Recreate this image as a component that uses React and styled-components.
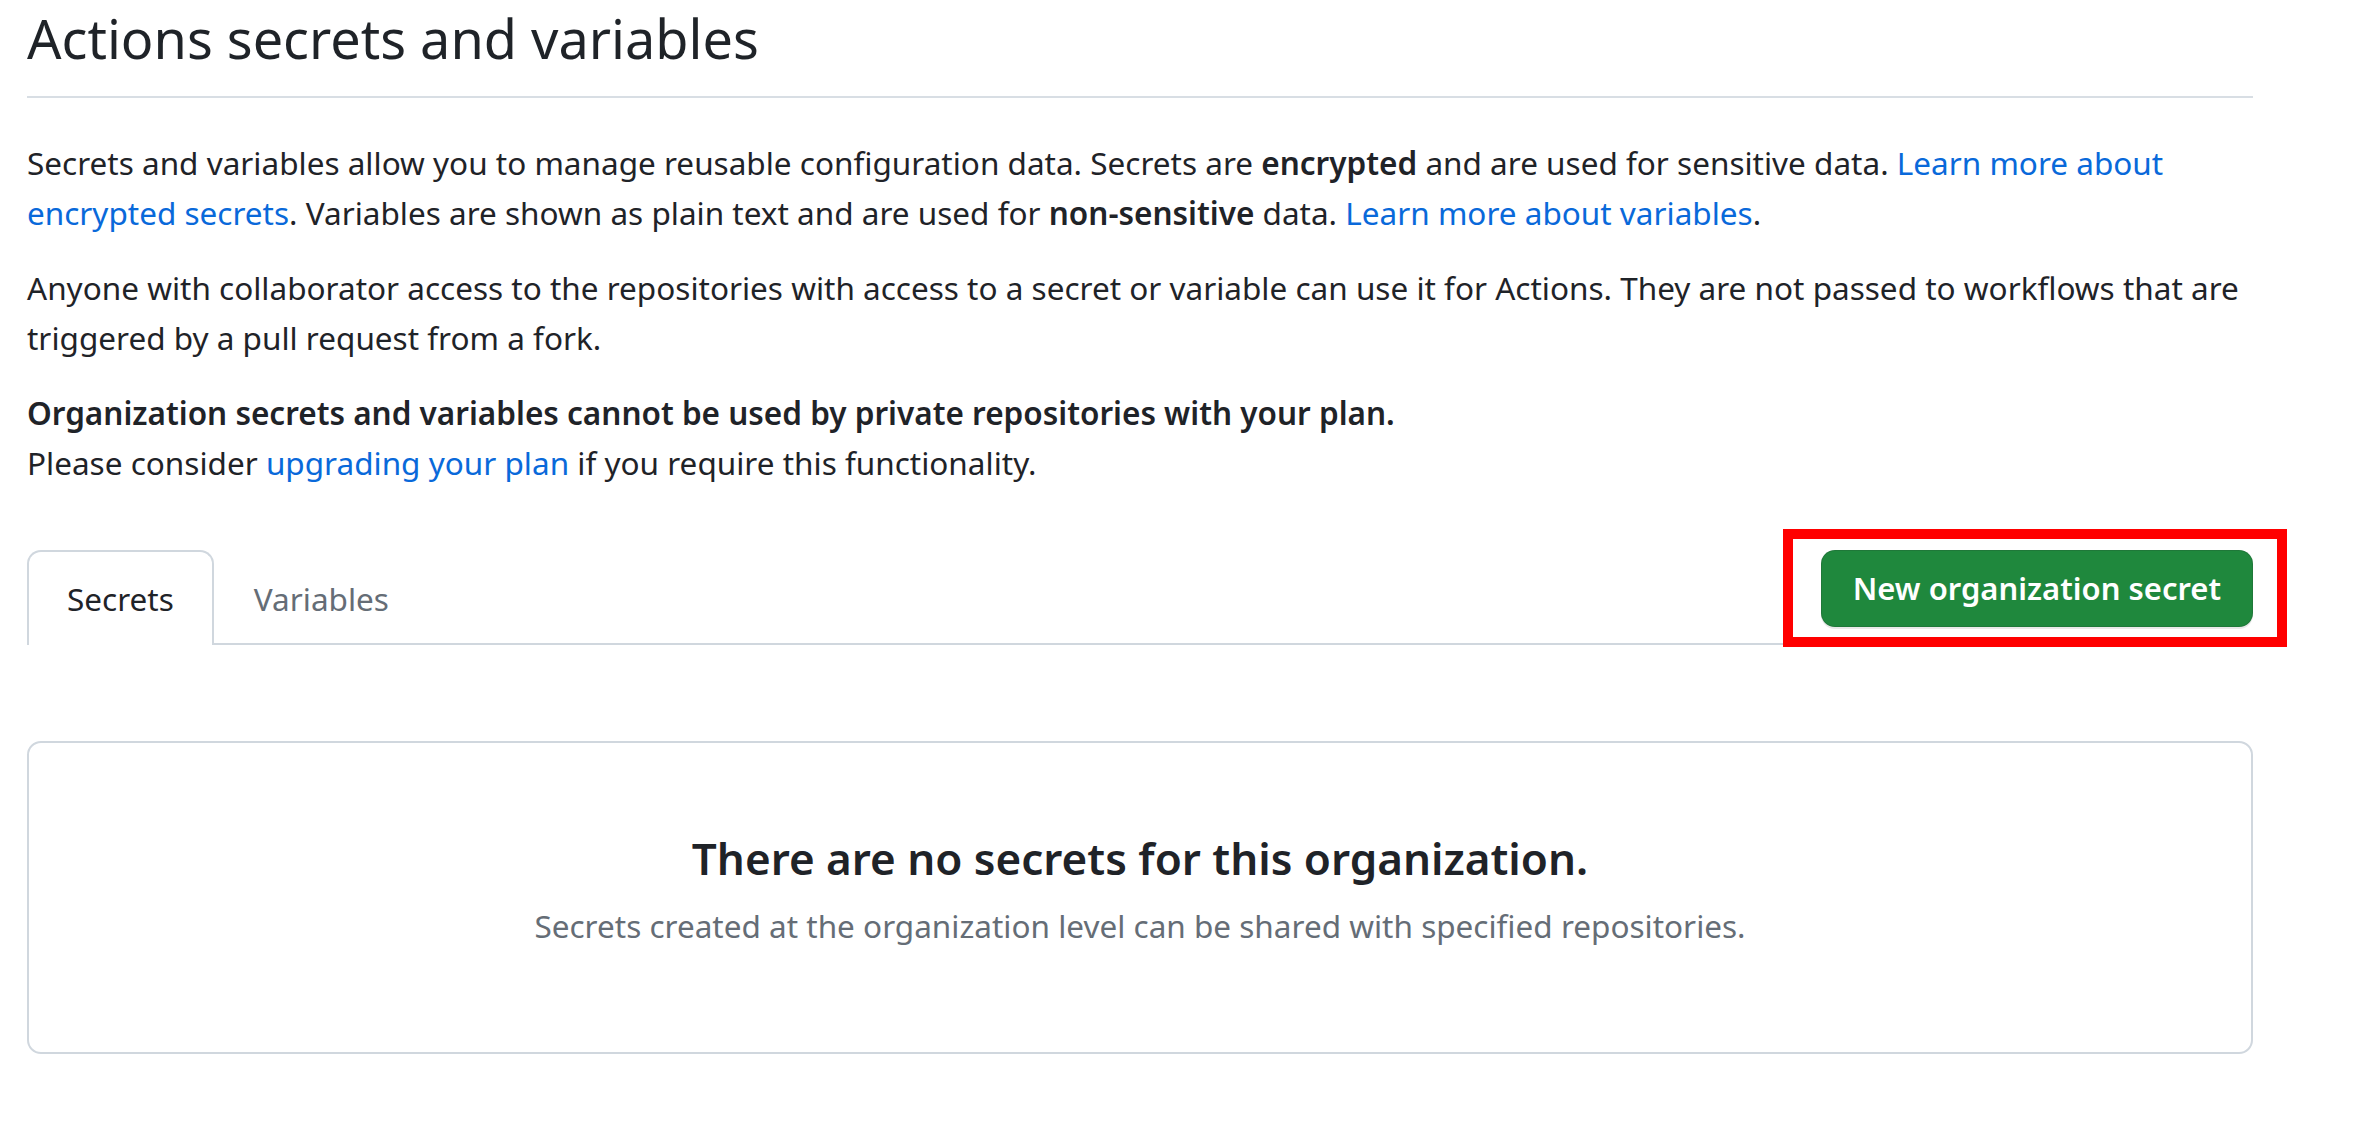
import React, { useState } from 'react';
import styled, { createGlobalStyle } from 'styled-components';

const GlobalStyle = createGlobalStyle`
  html, body {
    margin: 0;
    padding: 0;
    background: #ffffff;
  }
  body {
    font-family: "Noto Sans", "Open Sans", "Liberation Sans", sans-serif;
    color: #1f2328;
  }
  * { box-sizing: border-box; }
`;

const Page = styled.div`
  padding: 0 108px 0 27px;
  font-size: 31.5px;
  line-height: 50px;
`;

const Subhead = styled.div`
  padding-bottom: 20px;
  border-bottom: 2px solid #d8dee4;
  margin-bottom: 40px;
`;

const Title = styled.h2`
  margin: 0;
  font-size: 54px;
  line-height: 76px;
  font-weight: 400;
  color: #1f2328;
`;

const Para = styled.p`
  margin: 0 0 25px;
  white-space: nowrap;
`;

const Strong = styled.strong`
  font-weight: 600;
`;

const Link = styled.a`
  color: #0969da;
  text-decoration: none;
  cursor: pointer;
`;

const TabNav = styled.div`
  display: flex;
  align-items: flex-start;
  margin-top: 62px;
  border-bottom: 2px solid #d0d7de;
`;

const Tab = styled.button`
  font: inherit;
  margin: 0 0 -2px;
  padding: 22px 38px 21px;
  line-height: 50px;
  background: ${(p) => (p.$active ? '#ffffff' : 'transparent')};
  color: ${(p) => (p.$active ? '#1f2328' : '#656d76')};
  border: 2px solid ${(p) => (p.$active ? '#d0d7de' : 'transparent')};
  border-bottom: none;
  border-radius: 14px 14px 0 0;
  cursor: pointer;
`;

const Extra = styled.div`
  position: relative;
  margin-left: auto;
`;

const PrimaryButton = styled.button`
  font: inherit;
  font-size: 31px;
  font-weight: 600;
  line-height: 75px;
  padding: 0 31px;
  color: #ffffff;
  background: #1f883d;
  border: 1px solid rgba(31, 35, 40, 0.15);
  border-radius: 14px;
  box-shadow: 0 2px 0 rgba(31, 35, 40, 0.1);
  white-space: nowrap;
  cursor: pointer;
`;

// red annotation frame drawn over the button
const Highlight = styled.div`
  position: absolute;
  top: -21px;
  left: -38px;
  right: -34px;
  bottom: -20px;
  border: 10px solid #ff0000;
  pointer-events: none;
  z-index: 2;
`;

const Blankslate = styled.div`
  margin-top: 96px;
  padding: 82px 32px 101px;
  border: 2px solid #d0d7de;
  border-radius: 14px;
  text-align: center;
`;

const BlankTitle = styled.h3`
  margin: 0 0 10px;
  font-size: 44px;
  line-height: 66px;
  font-weight: 600;
  color: #1f2328;
`;

const BlankText = styled.p`
  margin: 0;
  color: #656d76;
`;

export default function App() {
  const [tab, setTab] = useState('secrets');

  return (
    <>
      <GlobalStyle />
      <Page>
        <Subhead>
          <Title>Actions secrets and variables</Title>
        </Subhead>

        <Para>
          Secrets and variables allow you to manage reusable configuration data. Secrets are{' '}
          <Strong>encrypted</Strong> and are used for sensitive data.{' '}
          <Link>Learn more about<br />encrypted secrets</Link>. Variables are shown as plain text and
          are used for <Strong>non-sensitive</Strong> data. <Link>Learn more about variables</Link>.
        </Para>
        <Para>
          Anyone with collaborator access to the repositories with access to a secret or variable can
          use it for Actions. They are not passed to workflows that are
          <br />
          triggered by a pull request from a fork.
        </Para>
        <Para>
          <Strong>Organization secrets and variables cannot be used by private repositories with your plan.</Strong>
          <br />
          Please consider <Link>upgrading your plan</Link> if you require this functionality.
        </Para>

        <TabNav>
          <Tab $active={tab === 'secrets'} onClick={() => setTab('secrets')}>
            Secrets
          </Tab>
          <Tab $active={tab === 'variables'} onClick={() => setTab('variables')}>
            Variables
          </Tab>
          <Extra>
            <PrimaryButton>New organization secret</PrimaryButton>
            <Highlight />
          </Extra>
        </TabNav>

        <Blankslate>
          <BlankTitle>There are no secrets for this organization.</BlankTitle>
          <BlankText>
            Secrets created at the organization level can be shared with specified repositories.
          </BlankText>
        </Blankslate>
      </Page>
    </>
  );
}
